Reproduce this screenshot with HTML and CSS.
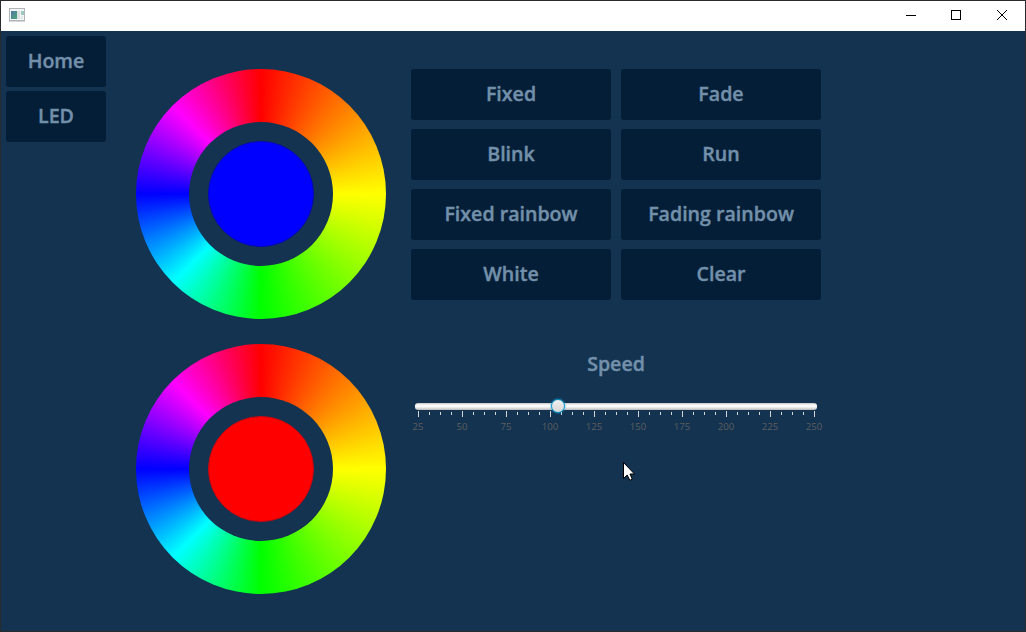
FILE: index.html
```html
<!DOCTYPE html>
<html lang="en">
<head>
<meta charset="utf-8">
<title>LED control</title>
<link rel="stylesheet" href="styles.css">
</head>
<body>
<div class="window">
  <header class="titlebar">
    <svg class="app-icon" width="16" height="14" viewBox="0 0 16 14">
      <defs><linearGradient id="pane" x1="0" y1="0" x2="1" y2="1"><stop offset="0" stop-color="#5277a5"/><stop offset="1" stop-color="#4fa878"/></linearGradient></defs>
      <rect x=".5" y=".5" width="15" height="12" fill="#f5f5f5" stroke="#b0b5ba"/>
      <path d="M0 13.5H16" stroke="#d4d6d8"/>
      <rect x="2" y="3" width="6" height="8" fill="url(#pane)"/>
      <rect x="8" y="3" width="3" height="8" fill="#dcdfe2"/>
      <rect x="12" y="3" width="3" height="4" fill="#9fc8c0"/>
      <rect x="12" y="8" width="2" height="3" fill="#e4e6e8"/>
    </svg>
    <div class="controls">
      <svg width="10" height="10" viewBox="0 0 10 10"><path d="M0 5.5H10" stroke="#000"/></svg>
      <svg width="10" height="10" viewBox="0 0 10 10"><rect x=".5" y=".5" width="9" height="9" fill="none" stroke="#000"/></svg>
      <svg width="10" height="10" viewBox="0 0 10 10"><path d="M0 0L10 10M10 0L0 10" stroke="#000"/></svg>
    </div>
  </header>
  <main class="content">
    <nav class="nav">
      <button class="btn">Home</button>
      <button class="btn">LED</button>
    </nav>
    <section class="wheels">
      <div class="wheel"><div class="hole"><div class="disc blue"></div></div></div>
      <div class="wheel"><div class="hole"><div class="disc red"></div></div></div>
    </section>
    <section class="panel">
      <div class="effects">
        <button class="btn">Fixed</button>
        <button class="btn">Fade</button>
        <button class="btn">Blink</button>
        <button class="btn">Run</button>
        <button class="btn">Fixed rainbow</button>
        <button class="btn">Fading rainbow</button>
        <button class="btn">White</button>
        <button class="btn">Clear</button>
      </div>
      <div class="speed">Speed</div>
      <div class="track"><div class="thumb"></div></div>
      <svg class="ticks" width="410" height="7" viewBox="0 0 410 7">
        <defs><pattern id="tick" width="44" height="7" x="7" patternUnits="userSpaceOnUse"><path d="M.5 0V6M11.5 1V4M22.5 1V4M33.5 1V4" stroke="#d6d6d6"/></pattern></defs>
        <rect x="7" width="397" height="7" fill="url(#tick)"/>
      </svg>
      <div class="labels"><span>25</span><span>50</span><span>75</span><span>100</span><span>125</span><span>150</span><span>175</span><span>200</span><span>225</span><span>250</span></div>
    </section>
  </main>
  <svg class="cursor" width="12" height="19" viewBox="0 0 12 19"><path d="M.5 .5V16.5L4.2 13L6.8 18.3L9.3 17.2L7 12H11.5Z" fill="#fff" stroke="#000"/></svg>
</div>
</body>
</html>
```
FILE: styles.css
```css
* { box-sizing: border-box; }
body { margin: 0; overflow: hidden; font-family: "Open Sans", "Noto Sans", sans-serif; }
.window {
  position: relative;
  display: flex;
  flex-direction: column;
  width: 1026px;
  height: 632px;
  border: 1px solid #292a2d;
  background: #133351;
}
.titlebar {
  display: flex;
  justify-content: space-between;
  height: 30px;
  padding: 7px 18px 0 8px;
  background: #fff;
}
.app-icon { display: block; }
.controls { display: flex; gap: 35px; padding-top: 2px; height: 12px; }
.controls svg { display: block; overflow: visible; }
.controls svg:last-child { margin-left: 1px; }
.content { display: flex; flex: 1; }
.nav {
  display: flex;
  flex-direction: column;
  gap: 4px;
  width: 100px;
  margin: 5px 30px 0 5px;
}
.btn {
  height: 51px;
  padding: 0 0 2px;
  border: 0;
  border-radius: 3px;
  background: #041e37;
  color: #7390aa;
  font: 600 19.6px/48px "Open Sans", "Noto Sans", sans-serif;
  -webkit-text-stroke: 0.4px #7390aa;
  white-space: nowrap;
}
.wheels { display: flex; flex-direction: column; gap: 25px; padding-top: 38px; }
.wheel {
  display: flex;
  align-items: center;
  justify-content: center;
  width: 250px;
  height: 250px;
  border-radius: 50%;
  background: conic-gradient(#f00, #ff0 90deg, #0f0 180deg, #0ff 225deg, #00f 270deg, #f0f 315deg, #f00);
}
.hole {
  display: flex;
  align-items: center;
  justify-content: center;
  width: 144px;
  height: 144px;
  border-radius: 50%;
  background: #133351;
}
.disc { width: 106px; height: 106px; margin: -1px 0 0 0; border-radius: 50%; }
.blue { background: #00f; border: 1.5px solid #0606b8; }
.red { background: #f00; border: 1.5px solid #c00810; }
.panel { width: 410px; margin: 38px 0 0 25px; }
.effects { display: grid; grid-template-columns: 200px 200px; gap: 9px 10px; }
.speed {
  margin-top: 50px;
  color: #7390aa;
  font-weight: 600;
  font-size: 19.6px;
  line-height: 27px;
  text-align: center;
  -webkit-text-stroke: 0.4px #7390aa;
}
.track {
  width: 402px;
  height: 7px;
  margin: 26px 0 0 4px;
  border-radius: 3px;
  background: linear-gradient(#c3c3c3, #f2f2f2 25%, #fff 45%, #dedede 75%, #b5b5b5);
}
.thumb {
  position: relative;
  top: -4px;
  left: 136px;
  width: 14px;
  height: 14px;
  border: 1.5px solid #0596cb;
  border-radius: 50%;
  background: linear-gradient(#f0f0f0, #d8d8d8);
  box-shadow: 0 0 2px #23a9dc;
}
.ticks { display: block; margin-top: 1px; }
.labels {
  display: grid;
  grid-template-columns: repeat(10, 44px);
  width: 440px;
  margin: 1px 0 0 -15px;
  color: #5e5e5e;
  font-size: 9.7px;
  line-height: 15px;
  text-align: center;
}
.cursor { position: absolute; left: 622px; top: 461px; }
```
